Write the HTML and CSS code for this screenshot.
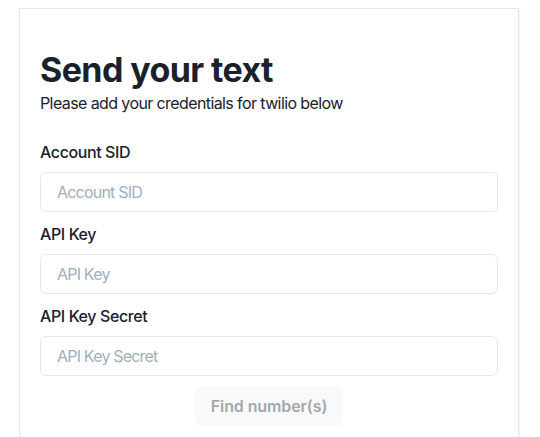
FILE: index.html
```html
<!DOCTYPE html>
<html lang="en">
<head>
<meta charset="utf-8">
<title>Send your text</title>
<link rel="stylesheet" href="styles.css">
</head>
<body>
<div class="card">
  <h1 class="title">Send your text</h1>
  <p class="subtitle">Please add your credentials for twilio below</p>
  <form class="form">
    <div class="field">
      <label class="label" for="sid">Account SID</label>
      <input class="input" id="sid" type="text" placeholder="Account SID">
    </div>
    <div class="field">
      <label class="label" for="key">API Key</label>
      <input class="input" id="key" type="text" placeholder="API Key">
    </div>
    <div class="field">
      <label class="label" for="secret">API Key Secret</label>
      <input class="input" id="secret" type="text" placeholder="API Key Secret">
    </div>
    <div class="actions">
      <button class="button" type="button" disabled>Find number(s)</button>
    </div>
  </form>
</div>
</body>
</html>
```

FILE: styles.css
```css
* { box-sizing: border-box; }
html, body { background: #ffffff; }
body {
  margin: 8px 0 0 19px;
  font-family: Inter, "Noto Sans", sans-serif;
  color: #1a202c;
}
.card {
  width: 500px;
  height: 440px;
  border: 1px solid #e2e8f0;
  border-bottom: none;
  box-shadow: 0 1px 3px rgba(0, 0, 0, 0.08), 0 1px 2px rgba(0, 0, 0, 0.04);
  padding: 41px 20px 0 20px;
}
.title {
  margin: 0;
  font-size: 34px;
  line-height: 1.2;
  font-weight: 700;
  letter-spacing: -0.6px;
  color: #1a202c;
}
.subtitle {
  margin: 0;
  font-size: 16px;
  line-height: 24px;
  letter-spacing: -0.6px;
  color: #1a202c;
}
.form {
  margin-top: 25px;
  display: flex;
  flex-direction: column;
  gap: 10px;
}
.field {
  display: flex;
  flex-direction: column;
}
.label {
  font-size: 16px;
  line-height: 24px;
  font-weight: 500;
  letter-spacing: -0.4px;
  margin-bottom: 8px;
}
.input {
  height: 40px;
  width: 100%;
  border: 1px solid #e2e8f0;
  border-radius: 6px;
  padding: 0 16px;
  font-family: inherit;
  font-size: 16px;
  letter-spacing: -0.8px;
  color: #1a202c;
  background: #fff;
  outline: none;
}
.input::placeholder { color: #a0aec0; opacity: 1; }
.actions {
  display: flex;
  justify-content: center;
}
.button {
  height: 40px;
  padding: 0 16px;
  border: none;
  border-radius: 6px;
  background: #edf2f7;
  color: #1a202c;
  font-family: inherit;
  font-size: 16px;
  font-weight: 600;
  letter-spacing: -0.1px;
  opacity: 0.4;
}
```
